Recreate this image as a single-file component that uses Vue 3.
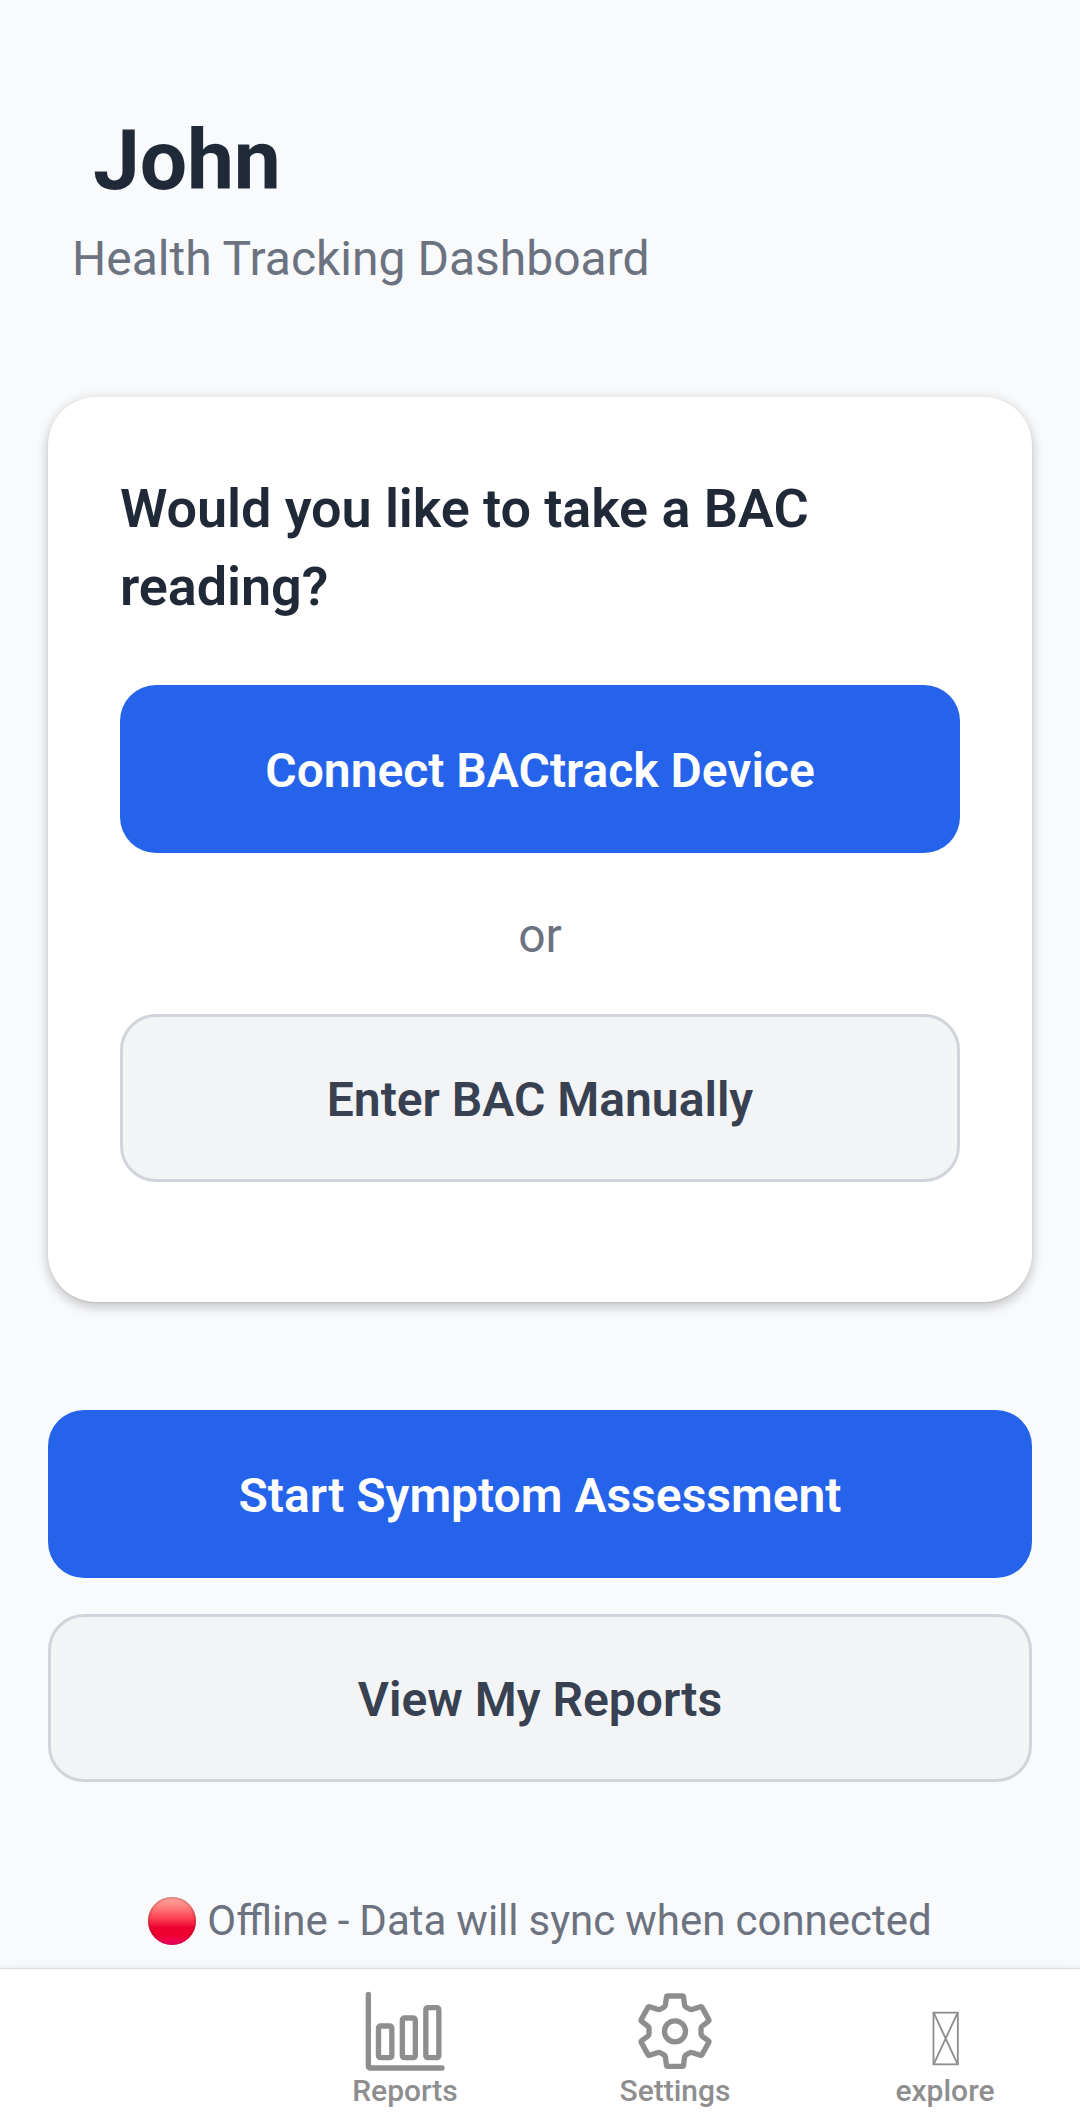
<script setup>
const tabs = [
  { id: 'reports', label: 'Reports' },
  { id: 'settings', label: 'Settings' },
  { id: 'explore', label: 'explore' },
]
</script>

<template>
  <div class="screen">
    <header class="header">
      <h1 class="name">John</h1>
      <p class="subtitle">Health Tracking Dashboard</p>
    </header>

    <section class="card">
      <h2 class="question">Would you like to take a BAC reading?</h2>
      <button class="btn primary">Connect BACtrack Device</button>
      <p class="or">or</p>
      <button class="btn secondary">Enter BAC Manually</button>
    </section>

    <div class="actions">
      <button class="btn primary">Start Symptom Assessment</button>
      <button class="btn secondary">View My Reports</button>
    </div>

    <div class="status">
      <span class="dot"></span>
      <span class="status-text">Offline - Data will sync when connected</span>
    </div>

    <nav class="tabs">
      <div class="tab"></div>
      <div v-for="tab in tabs" :key="tab.id" class="tab">
        <svg class="icon" viewBox="99 86 252 252" fill="none" stroke="#8e8e8f" stroke-width="16" stroke-linejoin="round" stroke-linecap="round">
          <template v-if="tab.id === 'reports'">
            <path d="M115 102V316Q115 323 122 323H336" />
            <rect x="145.500" y="197" width="40" height="95" rx="6" />
            <rect x="217" y="173" width="39" height="119" rx="6" />
            <rect x="287.500" y="142" width="39" height="150" rx="6" />
          </template>
          <template v-else-if="tab.id === 'settings'">
            <path d="M203 107H247Q250 107 250.500 110L254 135Q255 139 259 141L268 146Q273 149 278 147L301 139Q304 138 306 141L326 177Q328 181 325 183L307 197Q303 200 303 204V221Q303 225 307 228L325 241Q328 243 326 247L306 283Q304 286 301 285L278 277Q273 275 268 278L259 283Q255 285 254 289L250.500 315Q250 318 247 318H203Q200 318 199.500 315L196 289Q195 285 191 283L182 278Q177 275 172 277L149 285Q146 286 144 283L124 247Q122 243 125 241L143 228Q147 225 147 221V204Q147 200 143 197L125 183Q122 181 124 177L144 141Q146 138 149 139L172 147Q177 149 182 146L191 141Q195 139 196 135L199.500 110Q200 107 203 107Z" />
            <circle cx="225" cy="213" r="31.500" />
          </template>
          <template v-else>
            <g stroke-width="5.500" stroke-linejoin="miter" stroke-linecap="butt">
              <rect x="190.500" y="157" width="73" height="155" />
              <path d="M191 157L263 312M263 157L191 312" />
            </g>
          </template>
        </svg>
        <span class="tab-label">{{ tab.label }}</span>
      </div>
    </nav>
  </div>
</template>

<style>
body {
  margin: 0;
  background: #f9fafc;
}
</style>

<style scoped>
.screen {
  box-sizing: border-box;
  width: 1080px;
  height: 2116px;
  display: flex;
  flex-direction: column;
  overflow: hidden;
  background: #f9fafc;
  font-family: Roboto, sans-serif;
}

h1, h2, p {
  margin: 0;
}

.header {
  padding: 110px 72px 102px;
}

.name {
  padding-left: 21px;
  font-size: 84px;
  line-height: 102px;
  font-weight: 700;
  letter-spacing: -0.2px;
  color: #1f2937;
}

.subtitle {
  margin-top: 11px;
  font-size: 48px;
  line-height: 72px;
  color: #6b7280;
}

.card {
  margin: 0 48px;
  padding: 73px 72px 120px;
  background: #fff;
  border-radius: 48px;
  box-shadow: 0 6px 12px rgba(0, 0, 0, 0.16), 0 0 14px rgba(0, 0, 0, 0.09), 0 1px 2px rgba(0, 0, 0, 0.08);
}

.question {
  margin-bottom: 59px;
  font-size: 54px;
  line-height: 78px;
  font-weight: 600;
  letter-spacing: -0.08px;
  color: #1f2937;
}

.btn {
  display: flex;
  align-items: center;
  justify-content: center;
  box-sizing: border-box;
  width: 100%;
  height: 168px;
  padding: 3px 0 0;
  border: 0;
  border-radius: 36px;
  font-family: inherit;
  font-size: 48px;
  line-height: 72px;
  font-weight: 600;
}

.primary {
  background: #2563eb;
  color: #fff;
}

.secondary {
  background: #f3f4f6;
  border: 3px solid #d1d5db;
  color: #374151;
}

.or {
  margin: 47px 0 42px;
  font-size: 48px;
  line-height: 72px;
  text-align: center;
  color: #6b7280;
}

.actions {
  display: flex;
  flex-direction: column;
  gap: 36px;
  margin: 108px 48px 0;
}

.status {
  display: flex;
  align-items: center;
  justify-content: center;
  gap: 11px;
  margin-top: 106px;
  font-size: 42px;
  line-height: 66px;
  word-spacing: -0.4px;
  color: #6b7280;
}

.dot {
  width: 48px;
  height: 48px;
  border-radius: 50%;
  background: linear-gradient(#ffaaa2 0%, #ff7e7c 22%, #fb3e50 45%, #ee0230 64%, #ee0030 80%, #f0006c 100%);
  box-shadow: inset 0 0 3px rgba(130, 20, 20, 0.75);
}

.tabs {
  display: flex;
  margin-top: auto;
  height: 147px;
  background: #fff;
  box-shadow: 0 -1px 1px rgba(0, 0, 0, 0.1), 0 -2px 10px rgba(0, 0, 0, 0.05);
}

.tab {
  flex: 1;
  display: flex;
  flex-direction: column;
  align-items: center;
  padding-top: 19.5px;
}

.icon {
  display: block;
  width: 84px;
  height: 84px;
}

.tab-label {
  font-size: 30px;
  line-height: 36px;
  font-weight: 500;
  color: #8e8e8f;
}
</style>
